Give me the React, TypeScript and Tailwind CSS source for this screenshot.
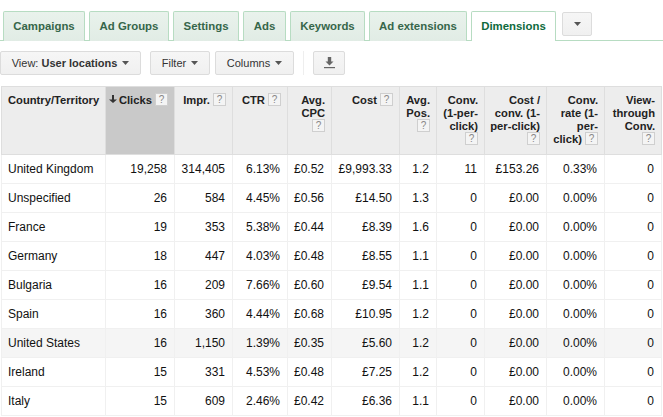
const tabs: [string, number][] = [["Campaigns", 82], ["Ad Groups", 80], ["Settings", 66], ["Ads", 43], ["Keywords", 75], ["Ad extensions", 98]];

const widths = [104, 69, 58, 55, 44, 68, 37, 48, 62, 58, 57];

const headers: { label: string[]; help: "inline" | "below" | "none" }[] = [
  { label: ["Country/Territory"], help: "none" },
  { label: ["Clicks"], help: "inline" },
  { label: ["Impr."], help: "inline" },
  { label: ["CTR"], help: "inline" },
  { label: ["Avg.", "CPC"], help: "below" },
  { label: ["Cost"], help: "inline" },
  { label: ["Avg.", "Pos."], help: "below" },
  { label: ["Conv.", "(1-per-", "click)"], help: "below" },
  { label: ["Cost /", "conv. (1-", "per-click)"], help: "below" },
  { label: ["Conv.", "rate (1-", "per-", "click)"], help: "inline" },
  { label: ["View-", "through", "Conv."], help: "below" },
];

const rows: string[][] = [
  ["United Kingdom", "19,258", "314,405", "6.13%", "£0.52", "£9,993.33", "1.2", "11", "£153.26", "0.33%", "0"],
  ["Unspecified", "26", "584", "4.45%", "£0.56", "£14.50", "1.3", "0", "£0.00", "0.00%", "0"],
  ["France", "19", "353", "5.38%", "£0.44", "£8.39", "1.6", "0", "£0.00", "0.00%", "0"],
  ["Germany", "18", "447", "4.03%", "£0.48", "£8.55", "1.1", "0", "£0.00", "0.00%", "0"],
  ["Bulgaria", "16", "209", "7.66%", "£0.60", "£9.54", "1.1", "0", "£0.00", "0.00%", "0"],
  ["Spain", "16", "360", "4.44%", "£0.68", "£10.95", "1.2", "0", "£0.00", "0.00%", "0"],
  ["United States", "16", "1,150", "1.39%", "£0.35", "£5.60", "1.2", "0", "£0.00", "0.00%", "0"],
  ["Ireland", "15", "331", "4.53%", "£0.48", "£7.25", "1.2", "0", "£0.00", "0.00%", "0"],
  ["Italy", "15", "609", "2.46%", "£0.42", "£6.36", "1.1", "0", "£0.00", "0.00%", "0"],
];

function Help() {
  return (
    <span className="inline-block -mt-[1px] w-[13px] h-[13px] border border-[#cfcfcf] bg-[#f4f4f4] text-[#888] text-[10px] leading-[11px] text-center font-normal align-top">
      ?
    </span>
  );
}

function Caret({ color = "#555" }: { color?: string }) {
  return (
    <svg width="7" height="4" viewBox="0 0 7 4" className="shrink-0">
      <path d="M0 0h7L3.5 4z" fill={color} />
    </svg>
  );
}

function Btn({ children, className }: { children: React.ReactNode; className: string }) {
  return (
    <div className={"h-[24px] flex items-center justify-center gap-[5px] rounded-[2px] border border-[#dcdcdc] bg-gradient-to-b from-[#f6f6f6] to-[#f0f0f0] text-[11px] text-[#333] " + className}>
      {children}
    </div>
  );
}

export default function App() {
  return (
    <div className="w-[663px] h-[417px] overflow-hidden bg-white text-[12px] text-[#111] font-['Liberation_Sans',Arial,sans-serif]">
      <div className="h-[41px] pt-[11px] pl-[3px] flex items-start gap-[4px] border-b border-[#b7dcc2]">
        {tabs.map(([t, w]) => (
          <div
            key={t}
            style={{ width: w }}
            className="h-[30px] shrink-0 flex items-center justify-center rounded-t-[2px] border border-b-0 border-[#b7dcc2] bg-gradient-to-b from-[#e9f2ec] to-[#e1ece5] text-[#36664a] text-[11.4px] font-bold"
          >
            {t}
          </div>
        ))}
        <div className="w-[85px] h-[30px] shrink-0 flex items-center justify-center rounded-t-[2px] border border-b-0 border-[#b7dcc2] bg-white text-[#0e6a3c] text-[11.4px] font-bold">
          Dimensions
        </div>
        <div className="ml-[2px] mt-[1px] w-[30px] h-[24px] shrink-0 flex items-center justify-center rounded-[2px] border border-[#dcdcdc] bg-gradient-to-b from-[#f6f6f6] to-[#f0f0f0]">
          <Caret />
        </div>
      </div>

      <div className="h-[24px] mt-[10px] flex items-center">
        <Btn className="w-[141px]">
          <span>
            View: <b className="text-[#333]">User locations</b>
          </span>
          <Caret />
        </Btn>
        <Btn className="w-[60px] ml-[9px]">
          <span>Filter</span>
          <Caret />
        </Btn>
        <Btn className="w-[79px] ml-[5px]">
          <span>Columns</span>
          <Caret />
        </Btn>
        <div className="w-px h-[24px] bg-[#eeeeee] ml-[9px]" />
        <Btn className="w-[32px] ml-[9px]">
          <svg width="11" height="12" viewBox="0 0 11 12">
            <path d="M3.8 0h3.4v4.5h2.3L5.5 8.5 1.5 4.5h2.3z" fill="#666" />
            <rect x="0" y="10" width="11" height="1.2" fill="#666" />
          </svg>
        </Btn>
      </div>

      <table className="mt-[11px] ml-[1px] table-fixed border-collapse w-[660px]">
        <colgroup>
          {widths.map((w, i) => (
            <col key={i} style={{ width: w }} />
          ))}
        </colgroup>
        <thead>
          <tr className="h-[68px]">
            {headers.map((h, i) => (
              <th
                key={i}
                className={
                  "align-top border border-[#dedede] pt-[7px] pb-0 leading-[13px] text-[11.2px] font-bold text-[#222] " +
                  (i === 0
                    ? "text-left pl-[6px] pr-0 bg-[#ededed] whitespace-nowrap"
                    : i === 1
                      ? "text-right pr-[6px] pl-0 bg-[#c9c9c9] whitespace-nowrap"
                      : "text-right pr-[6px] pl-0 bg-[#ededed]")
                }
              >
                {i === 1 && (
                  <svg width="8" height="8" viewBox="0 0 8 8" className="inline-block mr-[2px] align-[1px]">
                    <path d="M3 0h2v4.5h3L4 8 0 4.5h3z" fill="#333" />
                  </svg>
                )}
                {h.label.map((l, j) => (
                  <span key={j}>
                    {j > 0 && <br />}
                    {l}
                  </span>
                ))}
                {h.help === "inline" && (
                  <>
                    {" "}
                    <Help />
                  </>
                )}
                {h.help === "below" && (
                  <>
                    <br />
                    <Help />
                  </>
                )}
              </th>
            ))}
          </tr>
        </thead>
        <tbody>
          {rows.map((r) => (
            <tr key={r[0]} className={"h-[29px] " + (r[0] === "United States" ? "bg-[#f5f5f5]" : "")}>
              {r.map((c, i) => (
                <td
                  key={i}
                  className={
                    "border border-[#f0f0f0] p-0 whitespace-nowrap " +
                    (i === 0 ? "text-left pl-[6px]" : "text-right pr-[7px]")
                  }
                >
                  {c}
                </td>
              ))}
            </tr>
          ))}
        </tbody>
      </table>
    </div>
  );
}
